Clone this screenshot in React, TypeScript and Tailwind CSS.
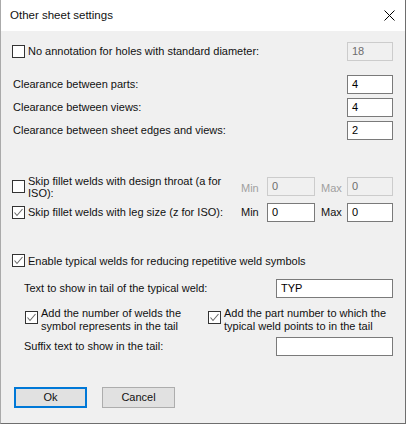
import React from "react";

function Check({ checked }: { checked?: boolean }) {
  return (
    <svg width="13" height="13" viewBox="0 0 13 13" className="shrink-0">
      <rect x="0.5" y="0.5" width="12" height="12" fill="#fff" stroke="#333" />
      {checked && (
        <polyline points="2.5,6.5 5,9.5 10.5,3" fill="none" stroke="#6a6a6a" strokeWidth="1.1" />
      )}
    </svg>
  );
}

function Field({ value, disabled, w }: { value?: string; disabled?: boolean; w: string }) {
  return (
    <div
      className={
        "h-[19px] flex items-center pl-[4px] border " +
        w +
        (disabled ? " bg-[#f0f0f0] border-[#cccccc] text-[#6d6d6d]" : " bg-white border-[#7a7a7a] text-black")
      }
    >
      {value}
    </div>
  );
}

export default function App() {
  return (
    <div
      className="w-[406px] h-[424px] flex flex-col border-l border-l-[#aaaaaa] border-r border-r-[#6e6e6e] border-b border-b-[#6e6e6e] text-[11px] text-[#111]"
      style={{ fontFamily: '"Liberation Sans", Arial, sans-serif' }}
    >
      {/* title bar */}
      <div className="h-[31px] bg-white flex items-center justify-between pl-[9px] pr-[10px]">
        <span className="text-[11.5px]">Other sheet settings</span>
        <svg width="11" height="11" viewBox="0 0 11 11">
          <path d="M0.5 0.5 L10.5 10.5 M10.5 0.5 L0.5 10.5" stroke="#000" strokeWidth="1" />
        </svg>
      </div>

      <div className="flex-1 bg-[#f0f0f0] pl-[11px] pr-[12px] pt-[11px] flex flex-col">
        <div className="flex items-center justify-between h-[19px]">
          <div className="flex items-center gap-[3px]">
            <Check />
            <span>No annotation for holes with standard diameter:</span>
          </div>
          <Field value="18" disabled w="w-[46px]" />
        </div>

        <div className="flex items-center justify-between h-[19px] mt-[14px]">
          <span className="pl-[1px]">Clearance between parts:</span>
          <Field value="4" w="w-[46px]" />
        </div>
        <div className="flex items-center justify-between h-[19px] mt-[4px]">
          <span className="pl-[1px]">Clearance between views:</span>
          <Field value="4" w="w-[46px]" />
        </div>
        <div className="flex items-center justify-between h-[19px] mt-[4px]">
          <span className="pl-[1px]">Clearance between sheet edges and views:</span>
          <Field value="2" w="w-[46px]" />
        </div>

        <div className="flex items-center justify-between h-[19px] mt-[37px]">
          <div className="flex items-center gap-[3px]">
            <Check />
            <span className="w-[200px] leading-[12.5px] mt-[1px]">
              Skip fillet welds with design throat (a for ISO):
            </span>
          </div>
          <div className="flex items-center">
            <span className="text-[#a0a0a0] w-[26px] mt-[3px]">Min</span>
            <Field value="0" disabled w="w-[48px]" />
            <span className="text-[#a0a0a0] w-[32px] pl-[6px] mt-[3px]">Max</span>
            <Field value="0" disabled w="w-[46px]" />
          </div>
        </div>

        <div className="flex items-center justify-between h-[19px] mt-[7px]">
          <div className="flex items-center gap-[3px]">
            <Check checked />
            <span>Skip fillet welds with leg size (z for ISO):</span>
          </div>
          <div className="flex items-center">
            <span className="w-[26px]">Min</span>
            <Field value="0" w="w-[48px]" />
            <span className="w-[32px] pl-[6px]">Max</span>
            <Field value="0" w="w-[46px]" />
          </div>
        </div>

        <div className="flex items-center gap-[3px] h-[19px] mt-[29px]">
          <Check checked />
          <span className="mt-[1px]">Enable typical welds for reducing repetitive weld symbols</span>
        </div>

        <div className="flex items-center justify-between h-[19px] mt-[9px] pl-[12px]">
          <span>Text to show in tail of the typical weld:</span>
          <Field value="TYP" w="w-[117px]" />
        </div>

        <div className="flex mt-[9px] pl-[13px] h-[26px]">
          <div className="flex items-start gap-[3px] w-[183px]">
            <div className="mt-[4px]">
              <Check checked />
            </div>
            <span className="leading-[13px]">
              Add the number of welds the
              <br />
              symbol represents in the tail
            </span>
          </div>
          <div className="flex items-start gap-[3px]">
            <div className="mt-[4px]">
              <Check checked />
            </div>
            <span className="leading-[13px]">
              Add the part number to which the
              <br />
              typical weld points to in the tail
            </span>
          </div>
        </div>

        <div className="flex items-center justify-between h-[19px] mt-[4px] pl-[12px]">
          <span>Suffix text to show in the tail:</span>
          <Field w="w-[117px]" />
        </div>

        <div className="flex gap-[15px] mt-[31px] pl-[2px]">
          <button className="w-[73px] h-[21px] bg-[#e1e1e1] border-2 border-[#0078d7] flex items-center justify-center">
            Ok
          </button>
          <button className="w-[73px] h-[21px] bg-[#e1e1e1] border border-[#adadad] flex items-center justify-center">
            Cancel
          </button>
        </div>
      </div>
    </div>
  );
}
